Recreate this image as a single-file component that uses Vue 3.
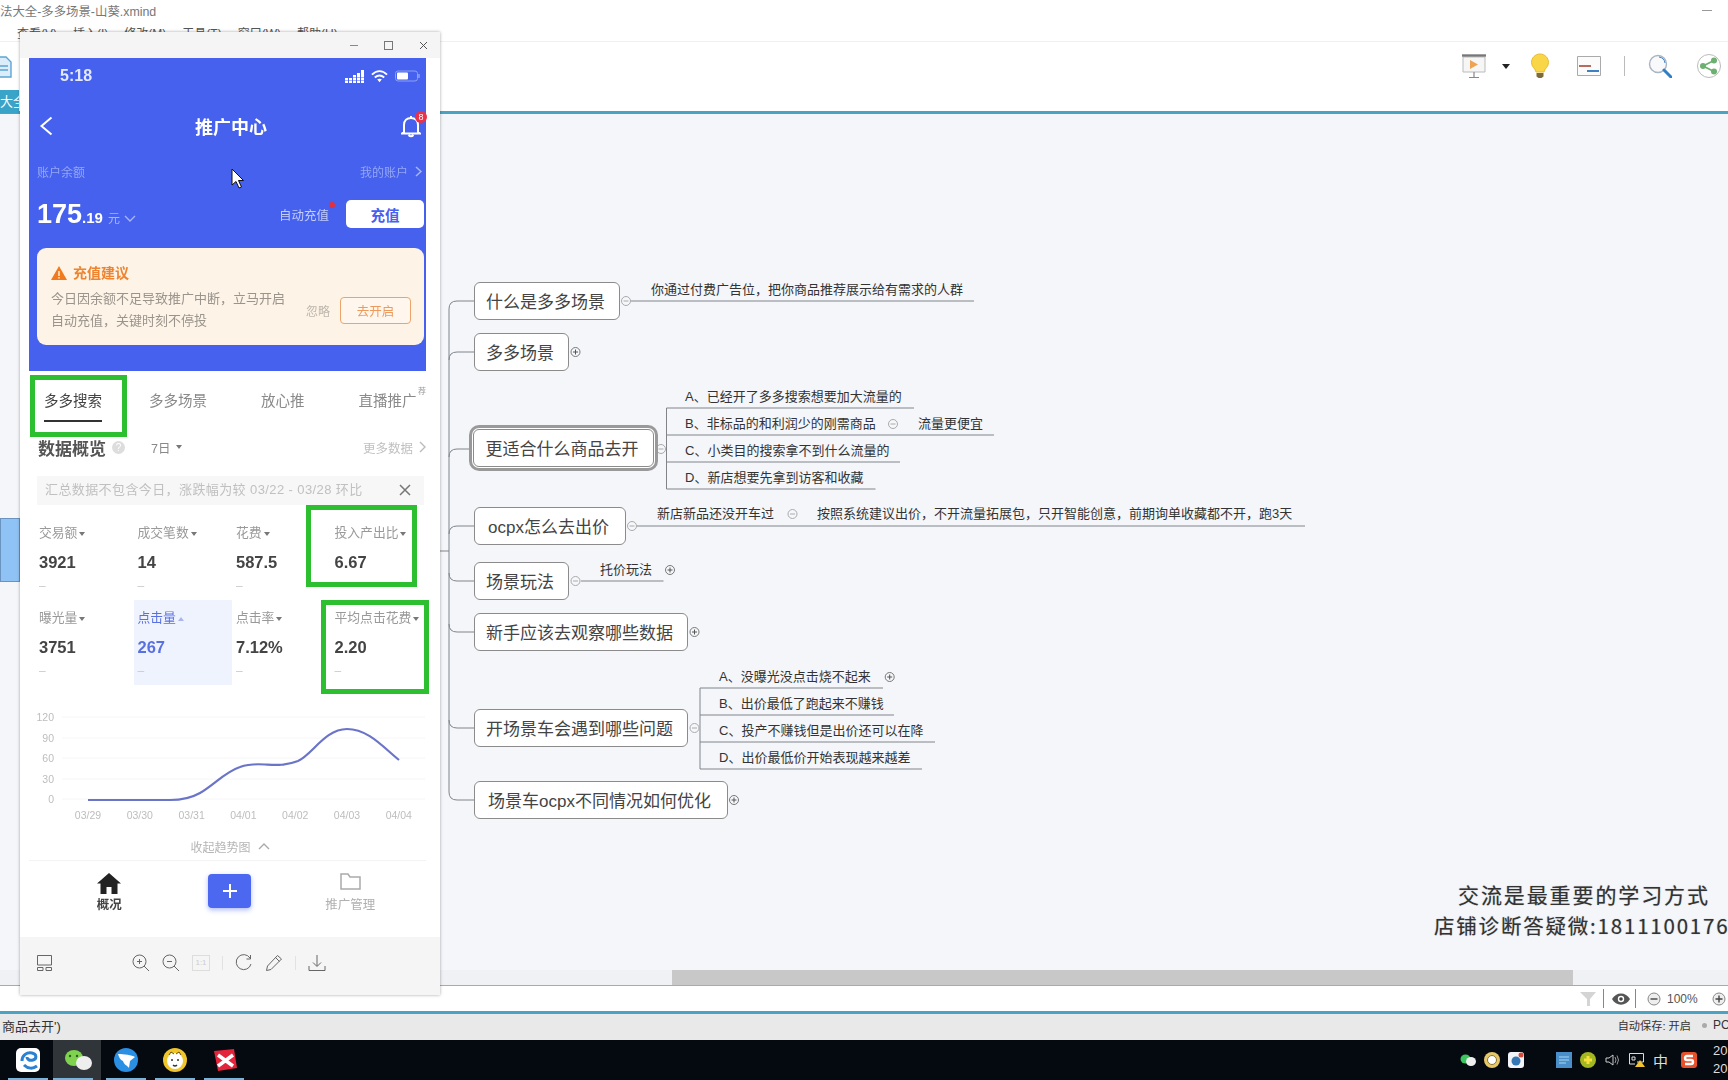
<script setup>
const CANVAS_TOP = 114;

const nodes = [
  { text: '什么是多多场景', x: 474, y: 282, w: 146 },
  { text: '多多场景', x: 474, y: 333, w: 95 },
  { text: '更适合什么商品去开', x: 473, y: 429, w: 181, active: true },
  { text: 'ocpx怎么去出价', x: 474, y: 507, w: 152 },
  { text: '场景玩法', x: 474, y: 562, w: 95 },
  { text: '新手应该去观察哪些数据', x: 474, y: 613, w: 214 },
  { text: '开场景车会遇到哪些问题', x: 474, y: 709, w: 214 },
  { text: '场景车ocpx不同情况如何优化', x: 474, y: 781, w: 254 }
];

const leaves = [
  { text: '你通过付费广告位，把你商品推荐展示给有需求的人群', x: 651, y: 290 },
  { text: 'A、已经开了多多搜索想要加大流量的', x: 685, y: 397 },
  { text: 'B、非标品的和利润少的刚需商品', x: 685, y: 424 },
  { text: '流量更便宜', x: 918, y: 424 },
  { text: 'C、小类目的搜索拿不到什么流量的', x: 685, y: 451 },
  { text: 'D、新店想要先拿到访客和收藏', x: 685, y: 478 },
  { text: '新店新品还没开车过', x: 657, y: 514 },
  { text: '按照系统建议出价，不开流量拓展包，只开智能创意，前期询单收藏都不开，跑3天', x: 817, y: 514 },
  { text: '托价玩法', x: 600, y: 570 },
  { text: 'A、没曝光没点击烧不起来', x: 719, y: 677 },
  { text: 'B、出价最低了跑起来不赚钱', x: 719, y: 704 },
  { text: 'C、投产不赚钱但是出价还可以在降', x: 719, y: 731 },
  { text: 'D、出价最低价开始表现越来越差', x: 719, y: 758 }
];

const links = [
  'M474 301H457Q449 301 449 309V792Q449 800 457 800H474',
  'M474 352H457Q449 352 449 360',
  'M474 449H457Q449 449 449 457',
  'M474 526H457Q449 526 449 534',
  'M474 581H457Q449 581 449 573',
  'M474 632H457Q449 632 449 624',
  'M474 728H457Q449 728 449 720',
  'M440 551H449',
  'M631 301H974',
  'M666.500 408V489M666.500 408H914M666.500 435H994M666.500 462H900M666.500 489H875.500',
  'M637 526H1305',
  'M581 581H663.500',
  'M700 688V769M700 688H883M700 715H894M700 742H935M700 769H922'
];

const toggles = [
  { x: 626, y: 301 },
  { x: 575.500, y: 352, plus: true },
  { x: 661, y: 449 },
  { x: 893, y: 424 },
  { x: 632, y: 526 },
  { x: 792.500, y: 514 },
  { x: 575.500, y: 581 },
  { x: 670, y: 570, plus: true },
  { x: 694.500, y: 632, plus: true },
  { x: 694.500, y: 728 },
  { x: 889.700, y: 677, plus: true },
  { x: 734, y: 800, plus: true }
];

const tabs = ['多多搜索', '多多场景', '放心推', '直播推广'];

const metrics = [
  { label: '交易额', value: '3921' },
  { label: '成交笔数', value: '14' },
  { label: '花费', value: '587.5' },
  { label: '投入产出比', value: '6.67' },
  { label: '曝光量', value: '3751' },
  { label: '点击量', value: '267', on: true },
  { label: '点击率', value: '7.12%' },
  { label: '平均点击花费', value: '2.20' }
];

const grid = [
  { label: '120', y: 717 },
  { label: '90', y: 738 },
  { label: '60', y: 758 },
  { label: '30', y: 779 },
  { label: '0', y: 799 }
];
const dates = ['03/29', '03/30', '03/31', '04/01', '04/02', '04/03', '04/04'];

const menus = ['查看(V)', '插入(I)', '修改(M)', '工具(T)', '窗口(W)', '帮助(H)'];
const taskSlots = [8, 53, 106, 155, 204];

const place = (x, y) => ({ left: x + 'px', top: y - CANVAS_TOP + 'px' });
</script>

<template>
  <div class="app">
    <header class="titlebar">
      <div class="doc-title">法大全-多多场景-山葵.xmind</div>
      <span class="win-min"></span>
      <nav class="menu">
        <span v-for="m in menus" :key="m">{{ m }}</span>
      </nav>
    </header>

    <div class="toolbar">
      <svg class="file-icon" width="12" height="22" viewBox="0 0 12 22">
        <path d="M-6 1H6L11 6V21H-6Z" fill="#dcecf8" stroke="#5aa5d6" stroke-width="1.4" />
        <path d="M0 10H8M0 14H8" stroke="#5aa5d6" stroke-width="1.4" />
      </svg>
      <div class="tool-right">
        <svg width="26" height="24" viewBox="0 0 26 24">
          <path d="M2 3H24V18H2Z" fill="#f6f6f6" stroke="#bbb" />
          <path d="M1 1.500H25" stroke="#777" stroke-width="2.4" />
          <path d="M9 6L17 10.500L9 15Z" fill="#eda452" />
          <path d="M13 18V23M8 23.500H18" stroke="#888" stroke-width="1.2" />
        </svg>
        <span class="caret"></span>
        <svg class="gap-bulb" width="20" height="26" viewBox="0 0 20 26">
          <path d="M10 1C5 1 1.500 5 1.500 9.500C1.500 14 5.500 15.500 6 19H14C14.500 15.500 18.500 14 18.500 9.500C18.500 5 15 1 10 1Z" fill="#f9d648" stroke="#e8bb2c" />
          <path d="M6.500 20H13.500V23.500L11.500 25H8.500L6.500 23.500Z" fill="#7d6b3a" />
        </svg>
        <svg class="gap-layout" width="24" height="20" viewBox="0 0 24 20">
          <path d="M.5.500H23.500V19.500H.5Z" fill="#fbfbfb" stroke="#aaa" />
          <path d="M2 10H14" stroke="#b86a5c" stroke-width="2" />
          <path d="M10 15H22" stroke="#3d80c4" stroke-width="2" />
        </svg>
        <span class="tool-sep"></span>
        <svg class="gap-search" width="24" height="24" viewBox="0 0 24 24">
          <circle cx="10" cy="10" r="8.500" fill="#f7f9fb" stroke="#aab5bf" stroke-width="1.4" />
          <path d="M11 3A7 7 0 0 1 17 9" stroke="#3d80c4" fill="none" />
          <path d="M16 16L23 23" stroke="#2f7fc6" stroke-width="3" stroke-linecap="round" />
        </svg>
        <svg class="gap-share" width="24" height="24" viewBox="0 0 24 24">
          <circle cx="12" cy="12" r="11.500" fill="#fff" stroke="#bbb" />
          <path d="M6 12L17 6.500M6 12L17 17.500" stroke="#6eb071" stroke-width="1.800" />
          <circle cx="6" cy="12" r="3" fill="#6eb071" />
          <circle cx="17" cy="6.500" r="3" fill="#6eb071" />
          <circle cx="17" cy="17.500" r="3" fill="#6eb071" />
        </svg>
      </div>
      <div class="doc-tab">大全</div>
    </div>
    <div class="teal"></div>

    <main class="workspace">
      <div class="canvas">
        <div class="selected-left"></div>
        <svg class="links" width="1728" height="856" viewBox="0 114 1728 856">
          <path v-for="d in links" :key="d" :d="d" fill="none" stroke="#808488" stroke-width="1" />
          <g v-for="t in toggles" :key="t.x + '-' + t.y">
            <circle :cx="t.x" :cy="t.y" r="4.500" fill="#f6f7fa" :stroke="t.plus ? '#777' : '#aaa'" />
            <path :d="`M${t.x - 2.500} ${t.y}H${t.x + 2.500}`" :stroke="t.plus ? '#555' : '#aaa'" />
            <path v-if="t.plus" :d="`M${t.x} ${t.y - 2.500}V${t.y + 2.500}`" stroke="#555" />
          </g>
        </svg>
        <div
          v-for="n in nodes"
          :key="n.text"
          class="node"
          :class="{ active: n.active }"
          :style="{ ...place(n.x, n.y), width: n.w + 'px' }"
        >
          {{ n.text }}
        </div>
        <div v-for="l in leaves" :key="l.text" class="leaf" :style="place(l.x, l.y - 10)">{{ l.text }}</div>

        <div class="watermark">
          <div class="wm-one">交流是最重要的学习方式</div>
          <div class="wm-two">店铺诊断答疑微:18111001768</div>
        </div>
      </div>
      <div class="hscroll"><div class="hthumb"></div></div>
    </main>

    <footer class="status">
      <svg width="18" height="16" viewBox="0 0 18 16">
        <path d="M1 1H17L11 8V15H8V8Z" fill="#d4d4d4" />
      </svg>
      <span class="st-sep"></span>
      <svg class="st-eye" width="18" height="12" viewBox="0 0 18 12">
        <path d="M0 6C4-1.500 14-1.500 18 6C14 13.500 4 13.500 0 6Z" fill="#555" />
        <circle cx="9" cy="6" r="3.200" fill="#fff" />
        <circle cx="9" cy="6" r="1.800" fill="#444" />
      </svg>
      <span class="st-sep st-sep2"></span>
      <svg class="st-minus" width="14" height="14" viewBox="0 0 14 14">
        <circle cx="7" cy="7" r="6" fill="#eee" stroke="#888" />
        <path d="M3.500 7H10.500" stroke="#444" stroke-width="1.400" />
      </svg>
      <span class="zoom-val">100%</span>
      <svg class="st-plus" width="14" height="14" viewBox="0 0 14 14">
        <circle cx="7" cy="7" r="6" fill="#eee" stroke="#888" />
        <path d="M3.500 7H10.500M7 3.500V10.500" stroke="#444" stroke-width="1.400" />
      </svg>
    </footer>
    <div class="teal"></div>
    <div class="savebar">
      <span class="cmd">商品去开')</span>
      <span class="autosave">自动保存: 开启</span>
      <span class="dot"></span>
      <span class="pc">PC</span>
    </div>

    <div class="taskbar">
      <div class="task-active"></div>
      <span v-for="x in taskSlots" :key="x" class="task-line" :style="{ left: x + 'px' }"></span>
      <svg class="task-icons" width="240" height="40" viewBox="0 0 240 40">
        <rect x="4" y="8" width="24" height="24" rx="5" fill="#fff" />
        <path d="M10 21C10 15 15 12 20 13C25 14 25 19 21 20C17 21 15 19 15 17M12 25C16 29 21 29 25 26" fill="none" stroke="#2b82d0" stroke-width="3" />
        <ellipse cx="62" cy="18" rx="9" ry="8" fill="#7fd24e" />
        <ellipse cx="72" cy="23" rx="8" ry="7" fill="#eee" />
        <circle cx="58" cy="16" r="1.200" fill="#2f5b20" /><circle cx="65" cy="16" r="1.200" fill="#2f5b20" />
        <g transform="translate(12 0)">
          <circle cx="102" cy="20" r="12" fill="#2b8fe3" />
          <path d="M94 14C100 14 108 15 111 17L106 21L105 28C103 25 100 25 99 21C96 20 95 17 94 14Z" fill="#fff" />
          <circle cx="151" cy="20" r="12" fill="#f1c62a" />
          <circle cx="151" cy="21" r="8" fill="#fff" />
          <path d="M145 15L147 12L150 14M157 15L155 12L152 14" fill="#fff" stroke="#6b4b1a" />
          <path d="M147 20H149M153 20H155M149 25Q151 27 153 25" stroke="#333" stroke-width="1.400" fill="none" />
          <path d="M190 11L210 9L213 28L194 31Z" fill="#e3243b" />
          <path d="M194 15L209 26M209 15L194 26" stroke="#fff" stroke-width="3.500" />
        </g>
      </svg>
      <div class="tray">
        <svg width="16" height="14" viewBox="0 0 16 14">
          <ellipse cx="5.500" cy="6" rx="5" ry="4.500" fill="#3cc55f" />
          <ellipse cx="11" cy="8.500" rx="5" ry="4.500" fill="#eee" />
        </svg>
        <svg width="16" height="16" viewBox="0 0 16 16">
          <circle cx="8" cy="8" r="8" fill="#e6c86a" /><circle cx="8" cy="8" r="4.500" fill="#fff" stroke="#8d7431" />
        </svg>
        <svg width="16" height="16" viewBox="0 0 16 16">
          <rect width="16" height="16" rx="3" fill="#f2f4f7" /><circle cx="8" cy="9" r="4.500" fill="#3678b5" /><circle cx="13" cy="3" r="2.500" fill="#d84a3a" />
        </svg>
        <svg class="tray-gap" width="16" height="16" viewBox="0 0 16 16">
          <rect width="16" height="16" fill="#4a8fc9" /><path d="M3 5H13M3 8H13M3 11H10" stroke="#a8d8f2" />
        </svg>
        <svg width="16" height="16" viewBox="0 0 16 16">
          <circle cx="8" cy="8" r="8" fill="#a3b722" /><path d="M4 8H12M8 4V12" stroke="#f5e13a" stroke-width="3" />
        </svg>
        <svg width="16" height="16" viewBox="0 0 16 16">
          <path d="M2 6H5L9 3V13L5 10H2Z" fill="none" stroke="#ccc" /><path d="M11 5Q13 8 11 11M13 3.500Q16 8 13 12.500" fill="none" stroke="#999" />
        </svg>
        <svg width="18" height="16" viewBox="0 0 18 16">
          <path d="M1.500 1.500H15.500V10H9M1.500 1.500V12H7M4 5H7V8H4Z" fill="none" stroke="#ddd" /><path d="M12 8L17 15H7Z" fill="#f1c232" />
        </svg>
        <span class="ime">中</span>
        <svg class="tray-gap2" width="18" height="18" viewBox="0 0 18 18">
          <rect x="1" y="1" width="16" height="16" rx="3" fill="#e7522b" />
          <path d="M13 5H7Q5 5 5 7T7 9H11Q13 9 13 11T11 13H5" fill="none" stroke="#fff" stroke-width="2.400" />
        </svg>
      </div>
      <div class="clock">
        <span>20</span>
        <span>20</span>
      </div>
    </div>

    <section class="viewer">
      <div class="viewer-bar">
        <span class="vb-min"></span>
        <span class="vb-max"></span>
        <svg width="9" height="9" viewBox="0 0 9 9"><path d="M1 1L8 8M8 1L1 8" stroke="#555" /></svg>
      </div>

      <div class="phone">
        <div class="blue">
          <div class="status-row">
            <span class="time">5:18</span>
            <div class="signal">
              <svg width="19" height="13" viewBox="0 0 19 13" fill="#fff">
                <path d="M0 8H3V10.500H0ZM0 11H3V13H0ZM4 8H7V10.500H4ZM4 11H7V13H4ZM8 5H11V7.500H8ZM8 8H11V10.500H8ZM8 11H11V13H8ZM12 3H15V7.500H12ZM12 8H15V10.500H12ZM12 11H15V13H12ZM16 0H19V7.500H16ZM16 8H19V10.500H16ZM16 11H19V13H16Z" />
              </svg>
              <svg width="17" height="13" viewBox="0 0 18 13">
                <path d="M1 4.500C6-.5 12-.5 17 4.500M4 7.500C7 5 11 5 14 7.500" fill="none" stroke="#fff" stroke-width="2" />
                <path d="M6.500 9.500L9 12.500L11.500 9.500Q9 8 6.500 9.500Z" fill="#fff" />
              </svg>
              <svg width="26" height="12" viewBox="0 0 26 12">
                <rect x=".5" y="1" width="22" height="10" rx="2.500" fill="none" stroke="#8fa1f5" />
                <rect x="2" y="2.500" width="11" height="7" rx="1" fill="#fff" />
                <path d="M24 4V8" stroke="#8fa1f5" stroke-width="1.500" />
              </svg>
            </div>
          </div>
          <div class="nav-row">
            <svg class="back" width="14" height="20" viewBox="0 0 14 20">
              <path d="M12.500 1.500L2.500 10L12.500 18.500" fill="none" stroke="#fff" stroke-width="2" />
            </svg>
            <span class="page-title">推广中心</span>
            <div class="bell">
              <svg width="20" height="23" viewBox="0 0 20 23">
                <path d="M3 17V10C3 5.500 6 3 10 3S17 5.500 17 10V17L19 18.500H1ZM7.500 20Q10 22.500 12.500 20M10 1V3" fill="none" stroke="#fff" stroke-width="2" />
              </svg>
              <span class="bell-badge">8</span>
            </div>
          </div>
          <div class="account-row">
            <span>账户余额</span>
            <span class="my-acc">我的账户
              <svg width="7" height="11" viewBox="0 0 7 11"><path d="M1 1L6 5.500L1 10" fill="none" stroke="#a9b7f7" stroke-width="1.500" /></svg>
            </span>
          </div>
          <div class="balance-row">
            <div class="amount">
              <span class="big">175</span><span class="cents">.19</span>
              <span class="yuan">元</span>
              <svg width="12" height="8" viewBox="0 0 12 8"><path d="M1 1L6 6L11 1" fill="none" stroke="#a9b7f7" stroke-width="1.300" /></svg>
            </div>
            <span class="auto">自动充值<i class="red-dot"></i></span>
            <button class="charge">充值</button>
          </div>
          <div class="advice">
            <div class="adv-head">
              <svg width="16" height="14" viewBox="0 0 16 14"><path d="M8 0L16 14H0Z" fill="#f07a1d" /><path d="M8 5V10M8 11V12.500" stroke="#fff" stroke-width="1.300" /></svg>
              充值建议
            </div>
            <div class="adv-body">
              <p>今日因余额不足导致推广中断，立马开启<br />自动充值，关键时刻不停投</p>
              <span class="ignore">忽略</span>
              <button class="open">去开启</button>
            </div>
          </div>
        </div>

        <div class="tabs">
          <span v-for="(t, i) in tabs" :key="t" class="tab" :class="{ current: i === 0 }">{{ t }}</span>
          <span class="tab-flag">荐</span>
        </div>

        <div class="overview">
          <h3>数据概览</h3>
          <span class="qmark">?</span>
          <span class="range">7日<i class="down"></i></span>
          <span class="more">更多数据
            <svg width="7" height="12" viewBox="0 0 7 12"><path d="M1 1L6 6L1 11" fill="none" stroke="#bbb" stroke-width="1.400" /></svg>
          </span>
        </div>

        <div class="notice">
          <span>汇总数据不包含今日，涨跌幅为较 03/22 - 03/28 环比</span>
          <svg width="12" height="12" viewBox="0 0 12 12"><path d="M1 1L11 11M11 1L1 11" stroke="#777" stroke-width="1.500" /></svg>
        </div>

        <div class="metrics">
          <div v-for="m in metrics" :key="m.label" class="metric" :class="{ on: m.on }">
            <div class="m-label">{{ m.label }}<i class="down" :class="{ up: m.on }"></i></div>
            <div class="m-value">{{ m.value }}</div>
            <div class="m-dash">–</div>
          </div>
        </div>

        <svg class="chart" width="397" height="132" viewBox="29 700 397 132">
          <g v-for="g in grid" :key="g.label">
            <path :d="`M62 ${g.y}H425`" stroke="#f6f6f6" />
            <text x="54" :y="g.y + 4" text-anchor="end" class="axis">{{ g.label }}</text>
          </g>
          <text v-for="(d, i) in dates" :key="d" :x="88 + i * 51.800" y="819" text-anchor="middle" class="axis">{{ d }}</text>
          <path
            d="M88 800H170C185 800 193 797 200 793C215 784 225 772 240 767C248 764 258 764 265 764.500C275 765 285 766 298 761C312 755 325 729 347 729C368 729 383 747 399 760"
            fill="none"
            stroke="#6a74c8"
            stroke-width="2.200"
          />
        </svg>

        <div class="collapse">
          收起趋势图
          <svg width="12" height="8" viewBox="0 0 12 8"><path d="M1 7L6 2L11 7" fill="none" stroke="#aaa" stroke-width="1.400" /></svg>
        </div>

        <div class="bottom-nav">
          <div class="nav-item cur">
            <svg width="24" height="21" viewBox="0 0 24 21">
              <path d="M12 0L24 10.500H20.500V21H14.500V14H9.500V21H3.500V10.500H0Z" fill="#222" />
            </svg>
            <span>概况</span>
          </div>
          <div class="nav-item">
            <button class="add">
              <svg width="16" height="16" viewBox="0 0 16 16"><path d="M8 1V15M1 8H15" stroke="#fff" stroke-width="2" /></svg>
            </button>
          </div>
          <div class="nav-item">
            <svg class="folder" width="21" height="17" viewBox="0 0 21 17">
              <path d="M1 1H8L10 4H20V16H1Z" fill="none" stroke="#aaa" stroke-width="1.500" />
            </svg>
            <span>推广管理</span>
          </div>
        </div>

        <div class="green g1"></div>
        <div class="green g2"></div>
        <div class="green g3"></div>
        <svg class="cursor" width="13" height="21" viewBox="0 0 13 21">
          <path d="M1 1V17L5 13.500L8 20L10.500 19L7.500 12.500H12.500Z" fill="#fff" stroke="#111" />
        </svg>
      </div>

      <div class="viewer-tools">
        <svg class="t-first" width="18" height="18" viewBox="0 0 18 18">
          <path d="M2.500 1.500H16.500V11H2.500ZM2.500 13.500H8V16.500H2.500ZM11 13.500H16.500V16.500H11Z" fill="none" stroke="#666" />
        </svg>
        <svg width="18" height="18" viewBox="0 0 18 18">
          <circle cx="7.500" cy="7.500" r="6.500" fill="none" stroke="#666" /><path d="M12 12L17 17M5 7.500H10M7.500 5V10" stroke="#666" />
        </svg>
        <svg width="18" height="18" viewBox="0 0 18 18">
          <circle cx="7.500" cy="7.500" r="6.500" fill="none" stroke="#666" /><path d="M12 12L17 17M5 7.500H10" stroke="#666" />
        </svg>
        <span class="one-one">1:1</span>
        <span class="t-sep"></span>
        <svg width="18" height="18" viewBox="0 0 18 18">
          <path d="M15 4A7.500 7.500 0 1 0 16 10M15.500 1V5H11.500" fill="none" stroke="#666" />
        </svg>
        <svg width="18" height="18" viewBox="0 0 18 18">
          <path d="M1.500 16.500L2.500 12L12.500 1.500L16.500 5L6 15.500ZM10.500 3.500L14.500 7.500" fill="none" stroke="#666" />
        </svg>
        <span class="t-sep"></span>
        <svg width="18" height="18" viewBox="0 0 18 18">
          <path d="M9 1V12M5 8.500L9 12.500L13 8.500M1 12V16.500H17V12" fill="none" stroke="#666" />
        </svg>
      </div>
    </section>
  </div>
</template>

<style>
html,
body {
  margin: 0;
  overflow: hidden;
}
</style>

<style scoped>
.app {
  position: relative;
  width: 1728px;
  height: 1080px;
  display: flex;
  flex-direction: column;
  overflow: hidden;
  background: #fff;
  font-family: "Liberation Sans", "Noto Sans CJK SC", sans-serif;
  color: #333;
}
svg {
  display: block;
  flex: none;
}
button {
  font-family: inherit;
  border: none;
  padding: 0;
}

.titlebar {
  position: relative;
  height: 42px;
  flex: none;
  border-bottom: 1px solid #f0f0f0;
  box-sizing: border-box;
  overflow: hidden;
}
.doc-title {
  font-size: 12.400px;
  line-height: 24px;
  color: #777;
}
.win-min {
  position: absolute;
  right: 16px;
  top: 10px;
  width: 10px;
  height: 1px;
  background: #999;
}
.menu {
  display: flex;
  gap: 16px;
  padding-left: 17px;
  margin-top: 1px;
  font-size: 12px;
  line-height: 18px;
  color: #555;
}

.toolbar {
  position: relative;
  height: 69px;
  flex: none;
  display: flex;
}
.file-icon {
  position: absolute;
  left: 0;
  top: 14px;
}
.doc-tab {
  position: absolute;
  left: 0;
  bottom: -2px;
  width: 19px;
  height: 23px;
  overflow: hidden;
  background: #3aa3c8;
  color: #fff;
  font-size: 13px;
  line-height: 23px;
  white-space: nowrap;
}
.tool-right {
  margin-left: 1461px;
  margin-top: 12px;
  display: flex;
  align-items: center;
  align-self: flex-start;
  height: 24px;
}
.caret {
  margin-left: 15px;
  border: 4px solid transparent;
  border-top: 5px solid #222;
  border-bottom: none;
}
.gap-bulb {
  margin-left: 20px;
}
.gap-layout {
  margin-left: 27px;
}
.tool-sep {
  width: 1px;
  height: 20px;
  margin-left: 23px;
  background: #bbb;
}
.gap-search {
  margin-left: 23px;
}
.gap-share {
  margin-left: 25px;
}

.teal {
  height: 3px;
  flex: none;
  background: #4ba3c3;
}

.workspace {
  flex: 1;
  display: flex;
  flex-direction: column;
  min-height: 0;
  background: #f4f6fa;
}
.canvas {
  position: relative;
  flex: 1;
  overflow: hidden;
}
.selected-left {
  position: absolute;
  left: 0;
  top: 404px;
  width: 20px;
  height: 64px;
  background: #8fc3f5;
  border: 1px solid #6a93c0;
  box-sizing: border-box;
}
.links {
  position: absolute;
  left: 0;
  top: 0;
}
.node {
  position: absolute;
  box-sizing: border-box;
  height: 38px;
  display: flex;
  align-items: center;
  justify-content: center;
  padding: 0 3px 2px 0;
  background: #fff;
  border: 1px solid #8b8b8b;
  border-radius: 6px;
  font-size: 17px;
  color: #444;
  white-space: nowrap;
}
.node.active {
  box-shadow: 0 0 0 1px #fff, 0 0 0 4px #999;
}
.leaf {
  position: absolute;
  font-size: 13px;
  line-height: 20px;
  white-space: nowrap;
  color: #333;
}
.watermark {
  position: absolute;
  left: 1434px;
  top: 764px;
  font-family: "Noto Sans CJK SC", sans-serif;
  white-space: nowrap;
  color: #333;
  text-shadow: 0 0 1px #999;
}
.wm-one {
  margin-left: 24px;
  font-size: 21px;
  letter-spacing: 1.900px;
  line-height: 32px;
}
.wm-two {
  font-size: 20.500px;
  letter-spacing: 1.800px;
  line-height: 30px;
}
.hscroll {
  height: 16px;
  flex: none;
  background: #eff1f4;
  border-bottom: 1px solid #aaa;
  box-sizing: border-box;
}
.hthumb {
  width: 901px;
  height: 100%;
  margin-left: 672px;
  background: #c8c8c8;
}

.status {
  height: 25px;
  flex: none;
  display: flex;
  align-items: center;
  padding-left: 1579px;
}
.st-sep {
  width: 1px;
  height: 19px;
  margin-left: 6px;
  background: #888;
}
.st-eye {
  margin-left: 8px;
}
.st-sep2 {
  margin-left: 5px;
}
.st-minus {
  margin-left: 11px;
}
.zoom-val {
  margin-left: 6px;
  font-size: 12px;
  color: #555;
}
.st-plus {
  margin-left: 14px;
}

.savebar {
  position: relative;
  height: 26px;
  flex: none;
  box-sizing: border-box;
  display: flex;
  align-items: center;
  padding-bottom: 4px;
  background: #e9e9e9;
  font-size: 12px;
  color: #333;
}
.cmd {
  padding-left: 2px;
  font-size: 13px;
}
.autosave {
  margin-left: auto;
  font-size: 11.200px;
}
.dot {
  width: 5px;
  height: 5px;
  margin-left: 11px;
  border-radius: 50%;
  background: #aaa;
}
.pc {
  width: 15px;
  margin-left: 6px;
  overflow: hidden;
}

.taskbar {
  position: relative;
  height: 40px;
  flex: none;
  background: #050a10;
}
.task-active {
  position: absolute;
  left: 53px;
  top: 0;
  width: 48px;
  height: 100%;
  background: #30353a;
}
.task-line {
  position: absolute;
  bottom: 0;
  width: 40px;
  height: 2px;
  background: #76b4dc;
}
.task-icons {
  position: absolute;
  left: 12px;
  top: 0;
}
.tray {
  position: absolute;
  left: 1460px;
  top: 0;
  height: 100%;
  display: flex;
  align-items: center;
  gap: 8px;
}
.tray-gap {
  margin-left: 24px;
}
.ime {
  margin-left: -1px;
  font-size: 15px;
  color: #ddd;
}
.tray-gap2 {
  margin-left: 4px;
}
.clock {
  position: absolute;
  left: 1713px;
  top: 2px;
  display: flex;
  flex-direction: column;
  font-size: 13px;
  line-height: 18px;
  color: #ddd;
}

/* floating picture viewer */
.viewer {
  position: absolute;
  left: 20px;
  top: 32px;
  width: 420px;
  height: 963px;
  display: flex;
  flex-direction: column;
  background: #fff;
  box-shadow: 0 0 3px rgba(0, 0, 0, 0.35);
}
.viewer-bar {
  height: 26px;
  flex: none;
  box-sizing: border-box;
  display: flex;
  align-items: center;
  justify-content: flex-end;
  gap: 26px;
  padding-right: 12px;
  background: #f5f5f5;
}
.vb-min {
  width: 8px;
  height: 1px;
  background: #888;
}
.vb-max {
  width: 7px;
  height: 7px;
  border: 1px solid #777;
}
.phone {
  position: relative;
  width: 397px;
  height: 879px;
  flex: none;
  margin-left: 9px;
  filter: blur(0.4px);
  font-size: 12px;
}
.blue {
  height: 313px;
  box-sizing: border-box;
  padding: 0 2px 0 8px;
  background: #4561ee;
  color: #fff;
}
.status-row {
  height: 36px;
  display: flex;
  align-items: center;
  justify-content: space-between;
  padding: 0 3px 0 23px;
}
.time {
  font-size: 16px;
  font-weight: 700;
  color: #e3e8ff;
}
.signal {
  display: flex;
  align-items: center;
  gap: 7px;
}
.nav-row {
  position: relative;
  height: 64px;
  display: flex;
  align-items: center;
  justify-content: space-between;
}
.back {
  margin-left: 2px;
}
.page-title {
  position: absolute;
  left: 158px;
  font-size: 18px;
  font-weight: 700;
}
.bell {
  position: relative;
  margin-right: 3px;
}
.bell-badge {
  position: absolute;
  right: -6px;
  top: -4px;
  width: 12px;
  height: 12px;
  border-radius: 50%;
  background: #e8334a;
  font-size: 9px;
  line-height: 12px;
  text-align: center;
}
.account-row {
  height: 26px;
  display: flex;
  align-items: center;
  justify-content: space-between;
  padding-right: 2px;
  font-size: 12px;
  color: #94a6f6;
}
.my-acc {
  display: flex;
  align-items: center;
  gap: 7px;
}
.balance-row {
  display: flex;
  align-items: center;
  margin-top: 13px;
  height: 34px;
}
.amount {
  display: flex;
  align-items: baseline;
  font-weight: 700;
  flex: 1;
}
.big {
  font-size: 27px;
}
.cents {
  font-size: 15px;
}
.yuan {
  margin-left: 5px;
  font-size: 12px;
  font-weight: 400;
  color: #a9b7f7;
}
.amount svg {
  margin-left: 4px;
}
.auto {
  position: relative;
  font-size: 12.500px;
  color: #c3cdfb;
}
.red-dot {
  position: absolute;
  right: -6px;
  top: -3px;
  width: 6px;
  height: 6px;
  border-radius: 50%;
  background: #e42f3c;
}
.charge {
  width: 78px;
  height: 28px;
  margin-left: 17px;
  border-radius: 5px;
  background: #fff;
  color: #4561ee;
  font-size: 14.500px;
  font-weight: 700;
}
.advice {
  height: 97px;
  margin-top: 17px;
  box-sizing: border-box;
  padding: 14px 13px 0 14px;
  border-radius: 9px;
  background: #fdf3e6;
}
.adv-head {
  display: flex;
  align-items: center;
  gap: 6px;
  font-size: 14px;
  font-weight: 700;
  line-height: 22px;
  color: #ee842f;
}
.adv-body {
  display: flex;
  align-items: center;
  margin-top: 4px;
}
.adv-body p {
  flex: 1;
  margin: 0;
  font-size: 13px;
  line-height: 22px;
  color: #9a948c;
  white-space: nowrap;
}
.ignore {
  color: #bdb6ad;
}
.open {
  width: 71px;
  height: 27px;
  margin-left: 10px;
  box-sizing: border-box;
  border: 1px solid #eba46c;
  border-radius: 4px;
  background: #fff7ee;
  color: #ee9a5c;
  font-size: 12.500px;
}

.tabs {
  position: relative;
  height: 60px;
  box-sizing: border-box;
  display: flex;
  align-items: flex-start;
  padding: 20px 0 0 15px;
  font-size: 14.500px;
  line-height: 20px;
  color: #8a8a8a;
}
.tab {
  margin-left: 54px;
  white-space: nowrap;
}
.tab:first-child {
  margin-left: 0;
}
.tab:nth-child(2) {
  margin-left: 47px;
}
.tab.current {
  color: #444;
  padding-bottom: 9px;
  border-bottom: 2px solid #333;
}
.tab-flag {
  position: absolute;
  right: 0;
  top: 11px;
  font-size: 8px;
  color: #999;
}
.overview {
  height: 32px;
  display: flex;
  align-items: center;
  padding: 0 0 0 9px;
}
.overview h3 {
  margin: 0;
  font-size: 17px;
  font-weight: 700;
  color: #555;
}
.qmark {
  width: 13px;
  height: 13px;
  margin-left: 6px;
  border-radius: 50%;
  background: #ddd;
  color: #fff;
  font-size: 10px;
  line-height: 13px;
  text-align: center;
}
.range {
  display: flex;
  align-items: center;
  gap: 4px;
  margin-left: 26px;
  font-size: 12.500px;
  color: #888;
}
.more {
  display: flex;
  align-items: center;
  gap: 6px;
  margin-left: auto;
  font-size: 12.500px;
  color: #c0c0c0;
}
.down {
  display: inline-block;
  border: 3px solid transparent;
  border-top: 4px solid #777;
  border-bottom: none;
  vertical-align: middle;
  margin-left: 2px;
}
.down.up {
  border-top: none;
  border-bottom: 4px solid #aab4ee;
}
.notice {
  height: 29px;
  margin: 13px 2px 10px 8px;
  padding: 0 13px 2px 8px;
  box-sizing: border-box;
  display: flex;
  align-items: center;
  justify-content: space-between;
  background: #f7f7f7;
  font-size: 13px;
  letter-spacing: 0.4px;
  line-height: 24px;
  color: #c0c0c0;
}
.metrics {
  display: grid;
  grid-template-columns: repeat(4, 98.500px);
  grid-auto-rows: 85px;
  padding-left: 6px;
}
.metric {
  box-sizing: border-box;
  padding: 10px 0 0 4px;
}
.metric.on {
  background: #eff3fe;
}
.m-label {
  height: 16px;
  font-size: 12.800px;
  line-height: 16px;
  color: #999;
  white-space: nowrap;
}
.on .m-label,
.on .m-value {
  color: #5a70e0;
}
.m-value {
  margin-top: 8px;
  height: 26px;
  font-size: 16.500px;
  font-weight: 700;
  line-height: 26px;
  color: #444;
}
.m-dash {
  margin-top: 4px;
  height: 14px;
  line-height: 14px;
  color: #ccc;
}
.chart {
  margin-top: 15px;
}
.axis {
  font-size: 10.500px;
  fill: #bdbdbd;
}
.collapse {
  height: 29px;
  box-sizing: border-box;
  display: flex;
  align-items: center;
  justify-content: center;
  gap: 7px;
  padding: 0 0 0 5px;
  border-bottom: 1px solid #f3f3f3;
  font-size: 12px;
  color: #b5b5b5;
}
.bottom-nav {
  height: 76px;
  display: grid;
  grid-template-columns: repeat(3, 120.500px);
  padding-left: 20px;
}
.nav-item {
  display: flex;
  flex-direction: column;
  align-items: center;
  gap: 2px;
  padding-top: 12px;
  font-size: 12.500px;
  line-height: 18px;
  color: #b0b0b0;
}
.nav-item.cur {
  color: #444;
  font-weight: 700;
}
.folder {
  margin-bottom: 4px;
}
.add {
  width: 43px;
  height: 34px;
  display: flex;
  align-items: center;
  justify-content: center;
  margin-top: 1px;
  border-radius: 4px;
  background: #4c68f0;
  box-shadow: 0 2px 5px rgba(76, 104, 240, 0.45);
}
.green {
  position: absolute;
  box-sizing: border-box;
  border: 5px solid #2cbf2f;
}
.g1 {
  left: 1px;
  top: 317px;
  width: 97px;
  height: 62px;
}
.g2 {
  left: 277px;
  top: 447px;
  width: 111px;
  height: 82px;
}
.g3 {
  left: 292px;
  top: 542px;
  width: 108px;
  height: 94px;
}
.cursor {
  position: absolute;
  left: 202px;
  top: 110px;
}
.viewer-tools {
  flex: 1;
  display: flex;
  align-items: center;
  gap: 12px;
  padding: 0 0 6px 15px;
  background: #f5f5f5;
}
.t-first {
  margin-right: 67px;
}
.one-one {
  width: 18px;
  height: 16px;
  box-sizing: border-box;
  border: 1px solid #ddd;
  font-size: 8px;
  line-height: 14px;
  text-align: center;
  color: #ccc;
}
.t-sep {
  width: 1px;
  height: 14px;
  background: #e2e2e2;
}
</style>
